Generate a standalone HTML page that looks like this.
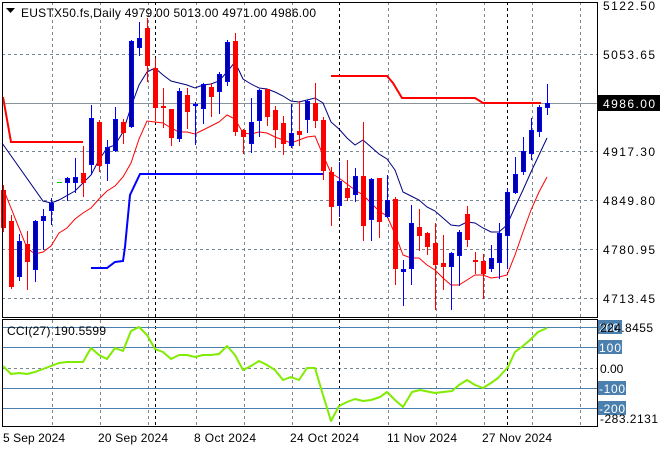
<!DOCTYPE html>
<html><head><meta charset="utf-8"><style>
html,body{margin:0;padding:0;background:#fff;width:660px;height:450px;overflow:hidden}
svg{display:block;font-family:"Liberation Sans",sans-serif;font-size:12px}
</style></head><body>
<svg width="660" height="450" viewBox="0 0 660 450" xmlns="http://www.w3.org/2000/svg">
<rect width="660" height="450" fill="#fff"/>
<g stroke="#7a8794" stroke-width="1" stroke-dasharray="3,3" shape-rendering="crispEdges">
<line x1="2" x2="597" y1="54.5" y2="54.5"/><line x1="2" x2="597" y1="151.5" y2="151.5"/><line x1="2" x2="597" y1="200.5" y2="200.5"/><line x1="2" x2="597" y1="249.5" y2="249.5"/><line x1="2" x2="597" y1="298.5" y2="298.5"/>
<path d="M52.5 2V317M100.5 2V317M148.5 2V317M196.5 2V317M244.5 2V317M292.5 2V317M388.5 2V317M436.5 2V317M484.5 2V317M532.5 2V317M580.5 2V317"/>
<path d="M52.5 320V426M100.5 320V426M148.5 320V426M196.5 320V426M244.5 320V426M292.5 320V426M388.5 320V426M436.5 320V426M484.5 320V426M532.5 320V426M580.5 320V426"/>
<line x1="2" x2="597" y1="368.5" y2="368.5"/>
</g>
<g stroke="#000" stroke-dasharray="3,3" shape-rendering="crispEdges">
<path d="M155.5 2V317M339.5 2V317M507.5 2V317M155.5 320V426M339.5 320V426M507.5 320V426"/>
</g>
<line x1="2" x2="597" y1="103.5" y2="103.5" stroke="#8a949c" shape-rendering="crispEdges"/>
<g stroke="#4a7fae" shape-rendering="crispEdges">
<path d="M2 327.5H597M2 347.5H597M2 388.5H597M2 408.5H597"/>
</g>
<polyline fill="none" stroke="#f00" stroke-width="2" points="3,97 11,142 83,142"/>
<polyline fill="none" stroke="#f00" stroke-width="2" points="331,76 387,76 393,83 402,98 475,98 483,103 541,103"/>
<polyline fill="none" stroke="#00f" stroke-width="2" points="91,268 107,268 115,262 123,261 125,247 130,195 140,174 323,174"/>
<polyline fill="none" stroke="#000080" stroke-width="1" points="2,143 43,201 51,203 59,200 75,191 91,175 99,160 107,148 115,145 123,132 131,107 139,85 147,72 155,68 163,75 171,81 179,83 187,85 195,88 203,85 211,84 219,81 227,72 235,62 243,79 251,84 259,88 267,89 275,92 283,96 291,101 299,102 307,100 315,98 323,103 331,122 339,129 347,138 355,145 363,140 371,147 379,154 387,159 395,170 403,192 411,196 419,200 427,207 435,211 443,218 451,225 459,226 467,222 475,223 483,228 491,232 499,232 507,225 515,207 523,190 531,172 539,155 547,138"/>
<polyline fill="none" stroke="#f00" stroke-width="1" points="3,188 27,248 35,254 43,252 51,246 59,233 67,228 75,219 83,213 91,208 99,199 107,191 115,186 123,177 131,163 139,139 147,121 155,122 163,123 171,128 179,132 187,132 195,134 203,130 211,126 219,122 227,115 235,119 243,133 251,134 259,132 267,133 275,137 283,140 291,143 299,140 307,137 315,136 323,155 331,173 339,178 347,184 355,190 363,195 371,203 379,211 387,216 395,234 403,255 411,258 419,258 427,265 435,270 443,278 451,285 459,285 467,280 475,275 483,275 491,278 499,277 507,275 515,255 523,232 531,210 539,192 547,177"/>
<g stroke="#f00" fill="#f00" shape-rendering="crispEdges">
<path d="M3.5 185V232M11.5 215V289M27.5 231V290M83.5 146V197M99.5 120V172M123.5 119V144M147.5 18V82M155.5 58V121M163.5 88V128M171.5 109V146M187.5 88V129M211.5 83V117M235.5 33V136M243.5 129V154M267.5 89V126M275.5 106V148M283.5 116V155M299.5 101V146M315.5 83V128M323.5 117V180M331.5 167V226M347.5 160V201M363.5 122V241M379.5 178V238M395.5 197V285M419.5 209V251M427.5 232V255M435.5 223V310M443.5 235V290M467.5 206V247M475.5 252V274M483.5 254V299"/>
<g stroke="none">
<rect x="1" y="190" width="5" height="38"/><rect x="9" y="221" width="5" height="66"/><rect x="25" y="244" width="5" height="18"/><rect x="81" y="173" width="5" height="10"/><rect x="97" y="122" width="5" height="44"/><rect x="121" y="122" width="5" height="11"/><rect x="145" y="28" width="5" height="38"/><rect x="153" y="68" width="5" height="40"/><rect x="161" y="106" width="5" height="2"/><rect x="169" y="109" width="5" height="29"/><rect x="185" y="95" width="5" height="17"/><rect x="209" y="87" width="5" height="10"/><rect x="233" y="41" width="5" height="91"/><rect x="241" y="130" width="5" height="7"/><rect x="265" y="89" width="5" height="28"/><rect x="273" y="110" width="5" height="20"/><rect x="281" y="123" width="5" height="21"/><rect x="297" y="131" width="5" height="4"/><rect x="313" y="103" width="5" height="18"/><rect x="321" y="120" width="5" height="51"/><rect x="329" y="172" width="5" height="35"/><rect x="345" y="188" width="5" height="10"/><rect x="361" y="176" width="5" height="50"/><rect x="377" y="178" width="5" height="44"/><rect x="393" y="199" width="5" height="70"/><rect x="417" y="227" width="5" height="9"/><rect x="425" y="233" width="5" height="14"/><rect x="433" y="243" width="5" height="22"/><rect x="441" y="263" width="5" height="4"/><rect x="465" y="214" width="5" height="26"/><rect x="473" y="260" width="5" height="2"/><rect x="481" y="261" width="5" height="13"/>
</g></g>
<g stroke="#00f" shape-rendering="crispEdges">
<path d="M19.5 234V281M35.5 220V282M43.5 209V250M51.5 198V225M67.5 177V201M75.5 158V193M91.5 105V175M107.5 140V181M115.5 107V152M131.5 40V128M139.5 22V56M179.5 88V142M195.5 102V145M203.5 83V124M219.5 72V114M227.5 40V86M251.5 98V153M259.5 89V137M291.5 104V148M307.5 100V133M339.5 162V217M355.5 168V202M371.5 178V241M387.5 175V218M403.5 260V306M411.5 205V285M451.5 252V310M459.5 230V286M491.5 245V272M499.5 223V279M507.5 188V269M515.5 157V194M523.5 137V175M531.5 118V160M539.5 105V137M547.5 84V115"/>
<g fill="#0000a0">
<rect x="17.5" y="241.5" width="4" height="35"/><rect x="33.5" y="221.5" width="4" height="48"/><rect x="41.5" y="216.5" width="4" height="4"/><rect x="49.5" y="203.5" width="4" height="7"/><rect x="65.5" y="178.5" width="4" height="4"/><rect x="73.5" y="177.5" width="4" height="5"/><rect x="89.5" y="118.5" width="4" height="46"/><rect x="105.5" y="147.5" width="4" height="16"/><rect x="113.5" y="119.5" width="4" height="31"/><rect x="129.5" y="41.5" width="4" height="85"/><rect x="137.5" y="38.5" width="4" height="9"/><rect x="177.5" y="91.5" width="4" height="47"/><rect x="193.5" y="104.5" width="4" height="1"/><rect x="201.5" y="84.5" width="4" height="24"/><rect x="217.5" y="74.5" width="4" height="17"/><rect x="225.5" y="42.5" width="4" height="39"/><rect x="249.5" y="122.5" width="4" height="21"/><rect x="257.5" y="90.5" width="4" height="30"/><rect x="289.5" y="133.5" width="4" height="12"/><rect x="305.5" y="101.5" width="4" height="18"/><rect x="337.5" y="181.5" width="4" height="24"/><rect x="353.5" y="176.5" width="4" height="18"/><rect x="369.5" y="179.5" width="4" height="40"/><rect x="385.5" y="200.5" width="4" height="16"/><rect x="401.5" y="269.5" width="4" height="2"/><rect x="409.5" y="223.5" width="4" height="45"/><rect x="449.5" y="253.5" width="4" height="13"/><rect x="457.5" y="232.5" width="4" height="23"/><rect x="489.5" y="258.5" width="4" height="10"/><rect x="497.5" y="233.5" width="4" height="29"/><rect x="505.5" y="192.5" width="4" height="43"/><rect x="513.5" y="174.5" width="4" height="18"/><rect x="521.5" y="151.5" width="4" height="20"/><rect x="529.5" y="130.5" width="4" height="23"/><rect x="537.5" y="107.5" width="4" height="24"/><rect x="545.5" y="103.5" width="4" height="4"/>
</g></g>
<line x1="57" x2="62" y1="182.5" y2="182.5" stroke="#0c0"/>
<polyline fill="none" stroke="#7fec00" stroke-width="2" stroke-linejoin="round" points="3,366 11,374 19,373 27,374 35,372 43,369 51,366 59,363 67,362 75,362 83,362 91,348 99,355 107,359 115,348 123,351 131,331 139,327 147,335 155,349 163,352 171,359 179,355 187,355 195,357 203,355 211,355 219,354 227,346 235,355 243,370 251,366 259,361 267,365 275,370 283,380 291,377 299,380 307,368 315,368 323,395 331,421 339,406 347,402 355,399 363,401 371,400 380,397 387,392 395,400 403,407 412,392 420,390 435,393 443,392 452,391 459,385 467,380 475,385 483,388 491,383 498,378 508,367 515,352 523,346 530,340 538,332 547,328"/>
<g fill="none" stroke="#000" shape-rendering="crispEdges">
<rect x="2.5" y="2.5" width="595" height="315"/>
<rect x="2.5" y="319.5" width="595" height="107"/>
</g>
<path d="M6 8h9l-4.5 5z" fill="#000"/>
<text x="21" y="17" fill="#000" textLength="295" lengthAdjust="spacing">EUSTX50.fs,Daily  4979.00 5013.00 4971.00 4986.00</text>
<text x="7" y="335" fill="#000" textLength="99" lengthAdjust="spacing">CCI(27) 190.5599</text>
<g fill="#000">
<text x="603" y="10" textLength="52">5122.50</text>
<text x="603" y="59" textLength="52">5053.65</text>
<text x="603" y="156" textLength="52">4917.30</text>
<text x="603" y="205" textLength="52">4849.80</text>
<text x="603" y="254" textLength="52">4780.95</text>
<text x="603" y="303" textLength="52">4713.45</text>
</g>
<rect x="598" y="95" width="62" height="16" fill="#000"/>
<text x="603" y="108" fill="#fff" textLength="52">4986.00</text>
<g fill="#4a7fae">
<rect x="598" y="320" width="24" height="14"/><rect x="598" y="340" width="24" height="14"/><rect x="598" y="381" width="28" height="14"/><rect x="598" y="401" width="28" height="14"/>
</g>
<g fill="#fff"><text x="599" y="332">200</text><text x="599" y="352" textLength="22">100</text><text x="599" y="393" textLength="26">-100</text><text x="599" y="413" textLength="26">-200</text></g>
<g fill="#000"><text x="600" y="332" textLength="53">224.8455</text><text x="600" y="373">0.00</text><text x="600" y="423" textLength="58">-283.2131</text></g>
<g fill="#000">
<text x="3" y="442" textLength="62">5 Sep 2024</text>
<text x="98" y="442" textLength="70">20 Sep 2024</text>
<text x="194" y="442" textLength="62">8 Oct 2024</text>
<text x="290" y="442" textLength="69">24 Oct 2024</text>
<text x="387" y="442" textLength="70">11 Nov 2024</text>
<text x="482" y="442" textLength="70">27 Nov 2024</text>
</g>
</svg>
</body></html>
